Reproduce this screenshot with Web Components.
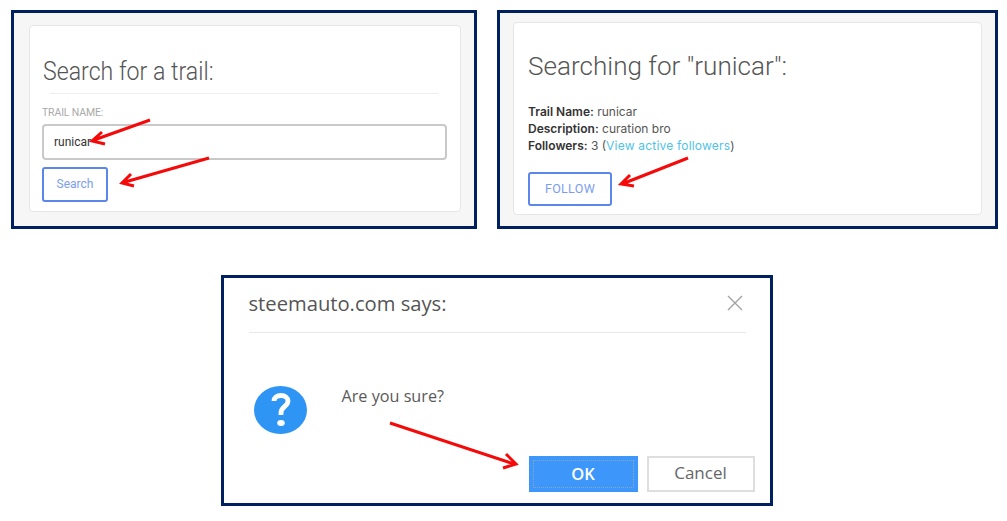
<!DOCTYPE html>
<html><head><meta charset="utf-8"><style>
html,body{margin:0;background:#fff}
body{width:1007px;height:521px;overflow:hidden;position:relative;font-family:Roboto,sans-serif}
</style></head><body>
<shot-page></shot-page>
<script>
function def(name, css, html){
  customElements.define(name, class extends HTMLElement{
    constructor(){super();const r=this.attachShadow({mode:'open'});r.innerHTML='<style>'+css+'</style>'+html;}
  });
}
def('frame-panel',`:host{display:block;box-sizing:border-box;border:3px solid #00205f;background:var(--bg,#f6f6f6);padding:var(--pad);width:var(--w);height:var(--h)}`,`<slot></slot>`);
def('web-card',`:host{display:block;box-sizing:border-box;background:#fff;border:1px solid #e6e6e6;border-radius:4px;height:100%;padding:var(--cp)}`,`<slot></slot>`);
def('outline-btn',`:host{display:flex;align-items:center;justify-content:center;box-sizing:border-box;border:2px solid #5c86ea;border-radius:3px;color:#7c9df0;font:400 var(--fs,12px) Roboto,sans-serif;width:var(--bw);height:var(--bh);letter-spacing:var(--ls,0);padding-bottom:2px}`,`<slot></slot>`);
def('search-card',`:host{display:block;color:#4a4a4a}
h2{font:300 26px/30px Roboto,sans-serif;margin:0 0 0 1px;color:#555;transform:scaleX(.89);transform-origin:left center;white-space:nowrap}
.rule{height:1px;background:#eee;margin:7px 8px 0 8px}
.lab{font:400 10.5px/12px Roboto,sans-serif;color:#aaa;margin-top:13px;letter-spacing:-.15px}
.input{box-sizing:border-box;height:36px;margin-top:5px;border:2px solid #c9c9c9;border-radius:4px;padding-left:10px;font:400 12px/33px Roboto,sans-serif;color:#333}
outline-btn{margin-top:7px}`,
`<h2>Search for a trail:</h2><div class="rule"></div><div class="lab">TRAIL NAME:</div><div class="input">runicar</div><outline-btn style="--bw:66px;--bh:35px;--fs:12px">Search</outline-btn>`);
def('result-card',`:host{display:block;color:#444}
h2{font:300 26.1px/30px Roboto,sans-serif;margin:0;color:#555;white-space:nowrap}
.info{margin-top:22px;font:400 12px/17px Inter,sans-serif;color:#555}
b{font-weight:600;color:#333}
a{color:#4fc3e8;text-decoration:none;letter-spacing:.2px}
outline-btn{margin-top:18px}`,
`<h2>Searching for "runicar":</h2><div class="info"><div><b>Trail Name:</b> runicar</div><div><b>Description:</b> curation bro</div><div><b>Followers:</b> 3 (<a>View active followers</a>)</div></div><outline-btn style="--bw:84px;--bh:34px;--fs:12.5px;--ls:.3px">FOLLOW</outline-btn>`);
def('confirm-dialog',`:host{display:block;color:#555;font-family:"Open Sans",sans-serif}
.head{box-sizing:content-box;display:flex;justify-content:space-between;align-items:center;height:50px;padding-bottom:4px;border-bottom:1px solid #e8e8e8;margin:0 24px 0 25px}
.title{font-size:20.200px;color:#555}
.body{display:flex;padding:53px 0 0 30px;height:70px}
.msg{font-size:16.200px;margin:0 0 0 35px;line-height:20px;color:#5a5a5a}
.acts{display:flex;justify-content:flex-end;gap:9px;padding-right:15px}
.ok,.cancel{box-sizing:border-box;height:36px;display:flex;align-items:center;justify-content:center;padding-bottom:2px}
.ok{width:109px;background:#3d97fb;color:#fff;font-weight:600;font-size:16.500px;outline:1px dotted #8ba5c4;outline-offset:-5px}
.cancel{width:108px;border:2px solid #dedede;color:#666;font-size:17px;padding-bottom:3px}
svg{display:block}`,
`<div class="head"><span class="title">steemauto.com says:</span><svg width="18" height="18" viewBox="0 0 18 18" style="margin-right:2px"><path d="M2 2L16 16M16 2L2 16" stroke="#a3a3a3" stroke-width="1.4" fill="none"/></svg></div>
<div class="body"><svg width="53" height="48" viewBox="0 0 53 48"><ellipse cx="26.500" cy="24" rx="26.500" ry="24" fill="#2f95f5"/><path d="M20 15c0-3.500 3-5.500 7-5.500 4.200 0 7 2.200 7 5.500 0 5.500-7 5.500-7 12v2" fill="none" stroke="#fff" stroke-width="4.800"/><ellipse cx="27" cy="37" rx="3.800" ry="2.900" fill="#fff"/></svg><div class="msg">Are you sure?</div></div>
<div class="acts"><div class="ok">OK</div><div class="cancel">Cancel</div></div>`);
def('red-arrow',`:host{position:absolute;left:0;top:0;display:block;pointer-events:none}svg{display:block}`,
`<svg width="1007" height="521" viewBox="0 0 1007 521" fill="none" stroke="#f50a0a" stroke-width="3">
<path d="M150 120L94 140M102 132L92 141L105 144"/>
<path d="M209 158L125 182M131 174L122 183L134 186"/>
<path d="M688 158L622 184M630 175L621 184L634 186"/>
<path d="M390 423L514 464M506 454L516 464L503 468"/>
</svg>`);
def('shot-page',`:host{display:block}
.top{display:flex;gap:20px;padding:10px 9px 0 11px}
.bottom{display:flex;justify-content:center;margin-top:46px;padding-right:14px}`,
`<div class="top">
<frame-panel style="--w:466px;--h:219px;--pad:12px 13px 14px 15px"><web-card style="--cp:30px 13px 0 12px"><search-card></search-card></web-card></frame-panel>
<frame-panel style="--w:501px;--h:219px;--pad:9px 13px 11px 13px"><web-card style="--cp:28px 14px 0 14px"><result-card></result-card></web-card></frame-panel>
</div>
<div class="bottom"><frame-panel style="--w:552px;--h:231px;--pad:0;--bg:#fff"><confirm-dialog></confirm-dialog></frame-panel></div>
<red-arrow></red-arrow>`);
</script>
</body></html>
